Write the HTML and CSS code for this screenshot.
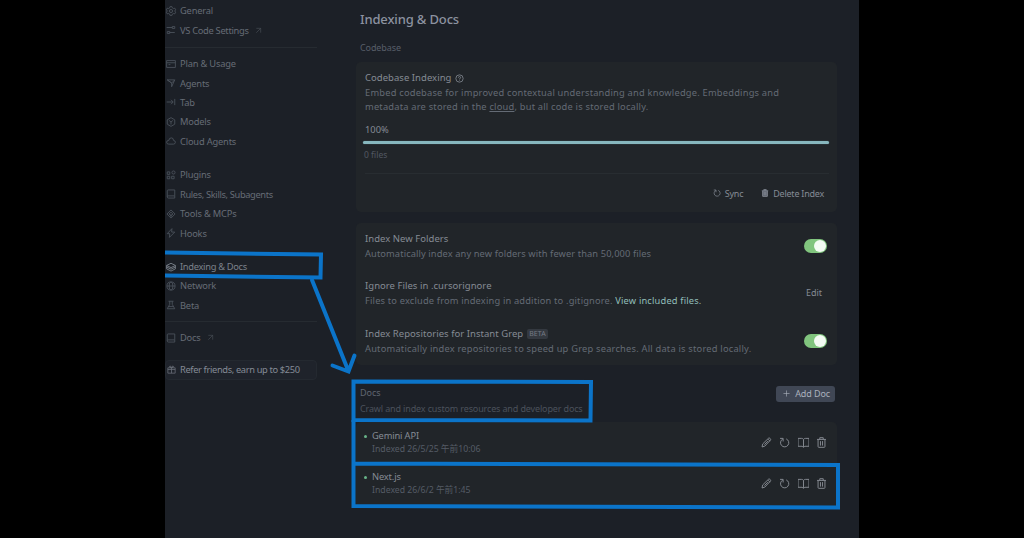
FILE: index.html
```html
<!DOCTYPE html>
<html lang="en">
<head>
<meta charset="utf-8">
<title>Indexing &amp; Docs</title>
<link rel="stylesheet" href="styles.css">
</head>
<body>
<svg class="defs" width="0" height="0">
  <symbol id="edit" viewBox="0 0 16 16"><path d="M1.500 14.500l1-4.500 8.500-8.300q1-.7 2.300.5t.5 2.300L5.500 13.300zM10 3l3 3M5 11l5-5"/></symbol>
  <symbol id="sync" viewBox="0 0 16 16"><path d="M1.500 2h4.500v4.500M5.500 3A6 6 0 1 0 10.500 2.800"/></symbol>
  <symbol id="book" viewBox="0 0 16 16"><path d="M8 3.500Q7 2 5 2H0v11.500h6l2 1.500 2-1.500h6V2h-5Q9 2 8 3.500zM8 3.500v11"/></symbol>
  <symbol id="trash" viewBox="0 0 16 16"><path d="M1.500 3.500h13M5.500 3.500V1h5v2.500M3 3.500V14q0 1 1 1h8q1 0 1-1V3.500M6.500 6v6.500M9.500 6v6.500"/></symbol>
  <symbol id="ext" viewBox="0 0 16 16"><path d="M3 13L13 3M3 3h10v10"/></symbol>
  <symbol id="docs" viewBox="0 0 16 16"><path d="M2 12V3q0-1.500 1.500-1.500H14V11H3.500Q2 11 2 12.500 2 14.500 4 14.500h10V11"/></symbol>
</svg>
<div class="window">
  <nav class="sidebar">
    <div class="group">
      <a class="item"><svg viewBox="0 0 16 16"><path d="M6.500 1h3l.6 2 2 1 2-.5 1.300 2.500L14 8l1.400 2-1.300 2.500-2-.5-2 1-.6 2h-3l-.6-2-2-1-2 .5L.6 10 2 8 .6 6l1.300-2.500 2 .5 2-1z"/><circle cx="8" cy="8" r="2.500"/></svg><span>General</span></a>
      <a class="item tight"><svg viewBox="0 0 16 16"><path d="M1 4h9M10 2.500h4v3h-4zM2 10.500h4v3H2zM6 12h8"/></svg><span>VS Code Settings</span><svg class="ext"><use href="#ext"/></svg></a>
    </div>
    <div class="group ruled">
      <a class="item"><svg viewBox="0 0 16 16"><path d="M1 2.500h14v11H1zM1 6h14M4 9h3"/></svg><span>Plan &amp; Usage</span></a>
      <a class="item"><svg viewBox="0 0 16 16"><path d="M2 3h12L9 14V8zM2 3l7 5M9 8l5-5"/></svg><span>Agents</span></a>
      <a class="item"><svg viewBox="0 0 16 16"><path d="M1 8h10M8 4.500L11.500 8 8 11.500M14 3v10"/></svg><span>Tab</span></a>
      <a class="item"><svg viewBox="0 0 16 16"><path d="M8 1l6 3.500v7L8 15l-6-3.500v-7zM5 5.500L8 8l3-2.500M8 8v4"/></svg><span>Models</span></a>
      <a class="item"><svg viewBox="0 0 16 16"><path d="M4.500 13Q1 13 1 10t3.500-3Q5 3 8.500 3T12 7q3 .3 3 3t-3 3z"/></svg><span>Cloud Agents</span></a>
    </div>
    <div class="group">
      <a class="item"><svg viewBox="0 0 16 16"><path d="M2 3h4v4H2zM2 10h4v4H2zM9 10h4v4H9z"/><circle cx="12" cy="4" r="2.500"/></svg><span>Plugins</span></a>
      <a class="item tighter"><svg><use href="#docs"/></svg><span>Rules, Skills, Subagents</span></a>
      <a class="item"><svg viewBox="0 0 16 16"><path d="M8 1.500L14.500 8 8 14.500 1.500 8zM5 8l3-3 3 3-3 3zM8 8v5"/></svg><span>Tools &amp; MCPs</span></a>
      <a class="item"><svg viewBox="0 0 16 16"><path d="M9.500 1L2 9h4l-.5 6L14 6.500H9z"/></svg><span>Hooks</span></a>
    </div>
    <div class="group">
      <a class="item active tight"><svg viewBox="0 0 16 16"><path d="M8 2l7 3.500L8 9 1 5.500zM1 8l7 3.500L15 8M1 5.500V11l7 3.500 7-3.500V5.500"/></svg><span>Indexing &amp; Docs</span></a>
      <a class="item"><svg viewBox="0 0 16 16"><circle cx="8" cy="8" r="6.500"/><ellipse cx="8" cy="8" rx="3" ry="6.500"/><path d="M1.500 8h13"/></svg><span>Network</span></a>
      <a class="item"><svg viewBox="0 0 16 16"><path d="M4 2h8M6 2v5l-4 7h12l-4-7V2M4 10.500h8"/></svg><span>Beta</span></a>
    </div>
    <div class="group ruled last">
      <a class="item"><svg><use href="#docs"/></svg><span>Docs</span><svg class="ext"><use href="#ext"/></svg></a>
    </div>
    <a class="refer"><svg viewBox="0 0 16 16"><path d="M1.500 5h13v9.500h-13zM1.500 8h13M8 5v9.500M8 5Q4 5 4.500 2.500 6 0 8 5q2-5 3.500-2.500Q12 5 8 5"/></svg><span>Refer friends, earn up to $250</span></a>
  </nav>

  <main class="content">
    <h1>Indexing &amp; Docs</h1>
    <h2>Codebase</h2>
    <section class="card codebase">
      <div class="title"><span>Codebase Indexing</span><svg viewBox="0 0 16 16"><circle cx="8" cy="8" r="6.500"/><path d="M6 6.500Q6 4.500 8 4.500t2 2Q10 8 8 8.500v1M8 11v1"/></svg></div>
      <p class="desc">Embed codebase for improved contextual understanding and knowledge. Embeddings and<br>metadata are stored in the <u>cloud</u>, but all code is stored locally.</p>
      <div class="percent">100%</div>
      <div class="bar"></div>
      <div class="files">0 files</div>
      <div class="actions">
        <button class="quiet"><svg><use href="#sync"/></svg>Sync</button>
        <button class="quiet"><svg class="filled"><use href="#trash"/></svg>Delete Index</button>
      </div>
    </section>

    <section class="card options">
      <div class="option"><div><div class="title">Index New Folders</div><p class="desc folders">Automatically index any new folders with fewer than 50,000 files</p></div><span class="toggle"></span></div>
      <div class="option"><div><div class="title">Ignore Files in .cursorignore</div><p class="desc ignore">Files to exclude from indexing in addition to .gitignore. <span class="link">View included files.</span></p></div><button class="quiet edit">Edit</button></div>
      <div class="option"><div><div class="title"><span>Index Repositories for Instant Grep</span><span class="beta">BETA</span></div><p class="desc">Automatically index repositories to speed up Grep searches. All data is stored locally.</p></div><span class="toggle"></span></div>
    </section>

    <header class="docs-head">
      <div><h3>Docs</h3><p>Crawl and index custom resources and developer docs</p></div>
      <button class="add"><svg viewBox="0 0 16 16"><path d="M8 1v14M1 8h14"/></svg>Add Doc</button>
    </header>
    <section class="card docs">
      <div class="doc"><i></i><div class="info"><b>Gemini API</b><small>Indexed 26/5/25 午前10:06</small></div><div class="tools"><svg><use href="#edit"/></svg><svg><use href="#sync"/></svg><svg><use href="#book"/></svg><svg><use href="#trash"/></svg></div></div>
      <div class="doc"><i></i><div class="info"><b>Next.js</b><small>Indexed 26/6/2 午前1:45</small></div><div class="tools"><svg><use href="#edit"/></svg><svg><use href="#sync"/></svg><svg><use href="#book"/></svg><svg><use href="#trash"/></svg></div></div>
    </section>
  </main>
</div>
<svg class="marks" viewBox="0 0 1024 538">
  <path d="M165 252.500L321 254.500 320.500 277.500 165 275.500"/>
  <path class="arrow" d="M312 280L348 370M332.500 365.500L348.500 371.500 354.500 355.500"/>
  <path d="M353.500 381.500L591 382 590.500 420.500 353.500 420z"/>
  <path d="M353.500 420V506L838 507.500V465L354 463.500"/>
</svg>
</body>
</html>
```
FILE: styles.css
```css
* { box-sizing: border-box; }
body { margin: 0; width: 1024px; height: 538px; overflow: hidden; background: #000; font-family: "Noto Sans", "Noto Sans CJK JP", sans-serif; color: #747a84; }
h1, h2, h3, p { margin: 0; font-weight: 400; }
.defs { position: absolute; }
svg { fill: none; stroke: currentColor; stroke-width: 1.4; flex: none; overflow: visible; }
.window { display: flex; width: 694px; height: 538px; margin-left: 165px; background: #1c2027; overflow: hidden; }

.sidebar { width: 152px; padding-top: 1px; flex: none; font-size: 9.3px; letter-spacing: -.18px; color: #666c76; }
.group { padding-bottom: 14px; }
.item { display: flex; align-items: center; height: 19.45px; padding-left: 1px; white-space: nowrap; }
.item svg { width: 10px; height: 10px; margin-right: 4px; color: #4c525b; }
.item .ext { width: 7px; height: 7px; margin-left: 6px; }
.tight { letter-spacing: -.3px; }
.tighter { letter-spacing: -.36px; }
.ruled { position: relative; }
.ruled::before { content: ""; position: absolute; top: -7px; left: 0; right: 0; height: 1px; background: #262b31; }
.last { margin-top: -1px; }
.item.active, .item.active svg { color: #7c828c; }
.refer { display: flex; align-items: center; height: 20px; margin-top: -2px; padding-left: 1px; border: 1px solid #242930; border-radius: 4px; background: #1f232b; color: #858b96; letter-spacing: -.35px; white-space: nowrap; }
.refer svg { width: 9px; height: 9px; margin-right: 4px; color: #686e78; }

.content { width: 481px; margin-left: 39px; white-space: nowrap; }
h1 { padding: 9px 0 0 4px; line-height: 20px; font-size: 13px; font-weight: 500; letter-spacing: -.15px; color: #8c92a0; }
h2 { padding: 11px 0 0 4px; line-height: 16px; font-size: 9px; letter-spacing: -.1px; color: #585e69; }
.card { background: #212529; border-radius: 5px; }
.codebase { height: 149.5px; margin-top: 6px; padding: 9px 8px 0 9px; }
.title { display: flex; align-items: center; height: 14px; line-height: 14px; font-size: 9.5px; letter-spacing: .04px; color: #858b94; }
.title svg { width: 9px; height: 9px; margin-left: 4px; }
.desc { margin-top: 1px; line-height: 14px; font-size: 9.3px; letter-spacing: .21px; color: #646b75; }
.percent { margin-top: 9px; line-height: 14px; font-size: 9.3px; color: #848a94; }
.bar { height: 3px; margin: 4px 0 0 -2px; border-radius: 2px; background: #87b7be; box-shadow: 0 0 1px #5d858c; }
.files { margin: 4px 0 0 -1px; line-height: 14px; font-size: 8.5px; color: #525862; }
.codebase .desc { margin-top: .5px; }
.folders { letter-spacing: .1px; }
.ignore { letter-spacing: .17px; }
.actions { display: flex; justify-content: flex-end; gap: 13px; margin-top: 11px; padding: 11px 4px 0 0; border-top: 1px solid #282d31; }
button { display: flex; align-items: center; padding: 0; border: 0; background: none; font: 9px "Noto Sans", sans-serif; letter-spacing: -.23px; color: #858b95; }
.quiet { height: 17px; padding: 0 1px 0 4px; }
.quiet svg { width: 8px; height: 8px; margin-right: 4px; }
.filled { fill: #646a74; }

.options { height: 142px; margin-top: 11px; padding: 7px 8px 0 9px; }
.option { display: flex; justify-content: space-between; height: 47.5px; padding-top: 2px; }
.toggle { width: 23px; height: 14px; margin: 7px 2px 0 0; border-radius: 7px; background: #81c57e; display: flex; justify-content: flex-end; padding: 1px; }
.toggle::after { content: ""; width: 12px; height: 12px; border-radius: 50%; background: #f3fbf3; }
.link { color: #92bfba; }
.edit { margin: 5px 6px 0 0; letter-spacing: 0; }
.beta { margin-left: 4px; padding: 0 2px; height: 10px; line-height: 10px; border-radius: 2px; font-size: 7px; background: #343940; color: #747a84; }

.docs-head { display: flex; justify-content: space-between; height: 57px; padding: 21px 2px 0 4px; }
.docs-head h3 { line-height: 14px; font-size: 9px; color: #606671; }
.docs-head p { margin-top: 2px; line-height: 14px; font-size: 9px; letter-spacing: -.14px; color: #4b515b; }
.add { height: 16px; padding: 0 5px 0 7px; border-radius: 3px; background: #404755; color: #abb1bd; letter-spacing: -.1px; }
.add svg { width: 7px; height: 7px; margin-right: 5px; }
.docs { height: 86px; }
.doc { display: flex; height: 41px; padding: 7px 10px 0 8px; }
.doc i { width: 3px; height: 3px; margin: 6px 5px 0 0; border-radius: 50%; background: #68b489; }
.info { flex: 1; }
.info b, .info small { display: block; line-height: 14px; font-weight: 400; font-size: 9.3px; letter-spacing: -.15px; color: #858b94; }
.info small { font-size: 8.7px; line-height: 13px; letter-spacing: 0; color: #555c66; }
.tools { display: flex; gap: 7.5px; padding-top: 8px; color: #858a92; }
.tools svg { width: 11px; height: 11px; }
.marks { position: absolute; inset: 0; width: 1024px; height: 538px; stroke: #0b74c9; stroke-width: 4; }
.arrow { stroke-linecap: round; }
```
